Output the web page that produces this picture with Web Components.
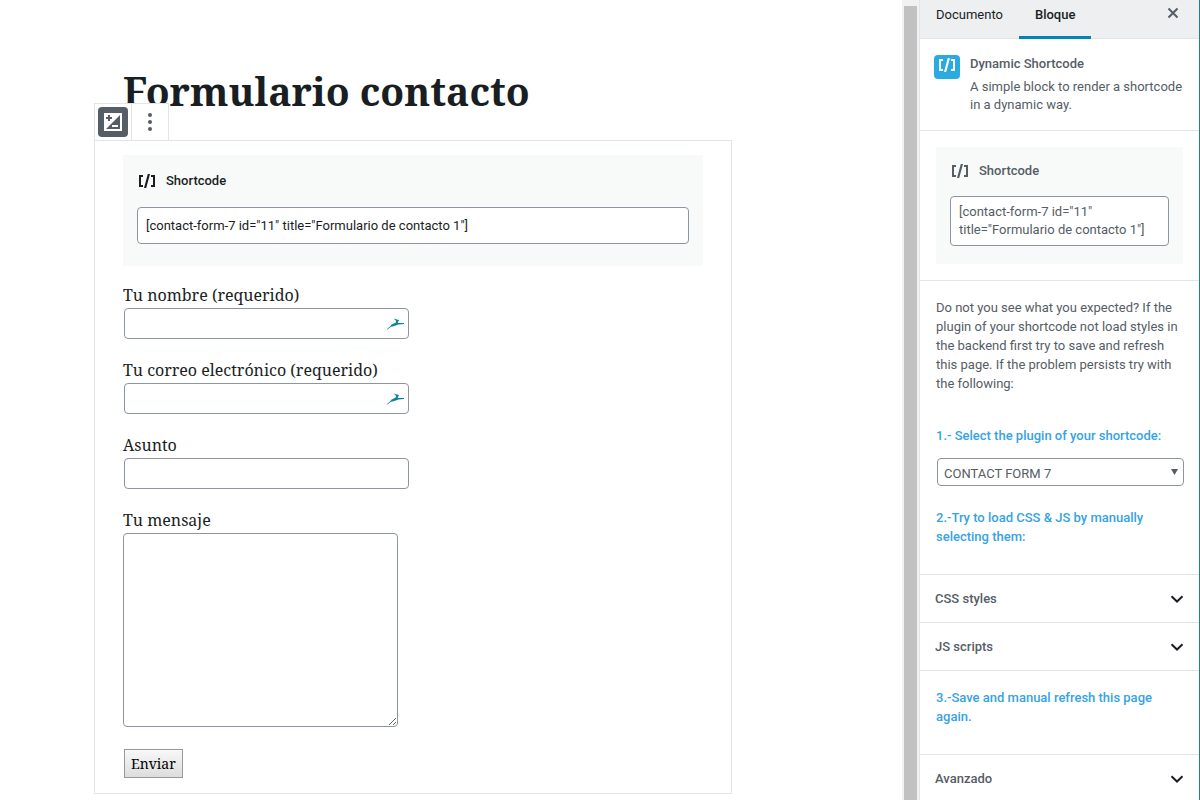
<!DOCTYPE html>
<html lang="es">
<head>
<meta charset="utf-8">
<meta name="viewport" content="width=device-width, initial-scale=1">
<title>Formulario contacto</title>
<style>
  html, body { height: 100%; margin: 0; }
  body {
    --ink: #191e23;
    --muted: #555d66;
    --line: #e2e4e7;
    --field: #8d96a0;
    --accent: #0085ba;
    --step: #36a3e2;
    --serif: "Noto Serif", "DejaVu Serif Condensed", serif;
    --sans: Roboto, "Noto Sans", sans-serif;
    background: #fff;
    color: var(--ink);
    font: 13px/18px var(--sans);
    overflow: hidden;
  }
</style>
</head>
<body>
<editor-shell>
  <editor-canvas slot="canvas">
    <shortcode-card slot="preview" value='[contact-form-7 id="11" title="Formulario de contacto 1"]'></shortcode-card>
    <contact-form></contact-form>
  </editor-canvas>
  <settings-sidebar slot="sidebar"></settings-sidebar>
</editor-shell>

<script>
  const define = (name, html, setup) => {
    const template = document.createElement('template');
    template.innerHTML = '<style>*, *::before { box-sizing: border-box; }</style>' + html;
    customElements.define(name, class extends HTMLElement {
      connectedCallback() {
        if (this.shadowRoot) return;
        const root = this.attachShadow({ mode: 'open' });
        root.append(template.content.cloneNode(true));
        if (setup) setup(this, root);
      }
    });
  };

  define('shortcode-icon', `
    <style>
      :host { display: block; width: 18px; height: 16px; }
      svg { display: block; }
    </style>
    <svg width="18" height="16" viewBox="0 0 18 16" fill="currentColor" aria-hidden="true">
      <path d="M1 2h4v2H3v8h2v2H1zM17 2h-4v2h2v8h-2v2h4zM9.800 1H12L8.200 15H6z"/>
    </svg>`);

  define('editor-shell', `
    <style>
      :host { display: flex; height: 100vh; overflow: hidden; }
      main { flex: 1; min-width: 0; overflow: hidden; }
      .track { width: 17px; padding: 6px 2px 0; background: #f1f1f1; }
      .thumb { height: 100%; background: #c1c1c1; }
      aside { width: 280px; border-left: 1px solid var(--line); overflow: hidden; }
      .edge { width: 1px; background: #1979ca; }
    </style>
    <main><slot name="canvas"></slot></main>
    <div class="track" aria-hidden="true"><div class="thumb"></div></div>
    <aside><slot name="sidebar"></slot></aside>
    <div class="edge"></div>`);

  define('editor-canvas', `
    <style>
      :host { display: block; padding: 63px 94px 0; }
      h1 { margin: 0; padding-left: 29px; font: bold 39px/56px var(--serif); white-space: nowrap; }
      .block { position: relative; max-width: 638px; margin-top: 21px; padding: 14px 28px 15px; border: 1px solid var(--line); }
      block-toolbar { position: absolute; left: -1px; bottom: calc(100% + 1px); }
    </style>
    <h1>Formulario contacto</h1>
    <section class="block">
      <block-toolbar></block-toolbar>
      <slot name="preview"></slot>
      <slot></slot>
    </section>`);

  define('block-toolbar', `
    <style>
      :host { display: flex; background: #fff; border: 1px solid var(--line); border-bottom: 0; }
      button { display: grid; place-items: center; width: 36px; height: 36px; padding: 0; border: 0; background: none; color: var(--muted); }
      button + button { width: 37px; border-left: 1px solid var(--line); }
      .on { display: grid; place-items: center; width: 30px; height: 30px; border-radius: 4px; background: var(--muted); }
      svg { display: block; }
    </style>
    <button type="button" aria-label="Vista previa"><span class="on">
      <svg width="18" height="18" viewBox="0 0 18 18"><path fill="#fff" d="M0 0h18v18H0z"/><path fill="#555d66" d="M16 2v14H2zM4 2h2v2h2v2H6v2H4V6H2V4h2z"/><path fill="#fff" d="M8 12h6v2H8z"/></svg>
    </span></button>
    <button type="button" aria-label="Más opciones">
      <svg width="4" height="18" viewBox="0 0 4 18" fill="currentColor"><circle cx="2" cy="2" r="2"/><circle cx="2" cy="9" r="2"/><circle cx="2" cy="16" r="2"/></svg>
    </button>`);

  define('shortcode-card', `
    <style>
      :host { display: block; padding: 14px; background: #f8f9f9; }
      :host([multiline]) { padding-top: 12px; }
      label { display: flex; align-items: center; gap: 10px; height: 24px; padding-left: 1px; font-weight: 500; }
      input, textarea { display: block; width: 100%; margin: 14px 0 8px; border: 1px solid var(--field); border-radius: 4px; background: #fff; color: inherit; font: inherit; padding: 0 8px; }
      input { height: 37px; }
      textarea { height: 50px; margin: 13px 0 4px; padding: 6px 8px; resize: none; overflow: hidden; }
    </style>
    <label for="code"><shortcode-icon></shortcode-icon>Shortcode</label>`,
    (host, root) => {
      const field = document.createElement(host.hasAttribute('multiline') ? 'textarea' : 'input');
      field.id = 'code';
      field.value = host.getAttribute('value');
      root.append(field);
    });

  define('form-field', `
    <style>
      :host { display: block; }
      label { display: block; font: 16px/26px var(--serif); white-space: nowrap; }
      .box { display: grid; width: 285px; margin-left: 1px; align-items: center; }
      input, svg { grid-area: 1 / 1; }
      input { width: 100%; height: 31px; padding: 0 8px; border: 1px solid var(--field); border-radius: 4px; background: #fff; }
      svg { display: none; justify-self: end; margin-right: 5px; pointer-events: none; }
      :host([autofill]) svg { display: block; }
    </style>
    <label for="field"><slot></slot></label>
    <div class="box">
      <input id="field">
      <svg width="18" height="14" viewBox="0 0 18 14" fill="#0e8299" aria-hidden="true"><path d="M.8 12.300L5 8.600 4.800 8 9.800 5.600 10.200 4 7.500 1.500 10 2.200 13 3 11.600 5.900H18V7.100L12.500 7.500 7.500 9.300 5 9.800 1 12.800z"/></svg>
    </div>`,
    (host, root) => { root.querySelector('input').type = host.getAttribute('type') || 'text'; });

  define('contact-form', `
    <style>
      :host { display: block; padding-top: 16px; font: 16px/26px var(--serif); }
      form { display: grid; gap: 18px; }
      label, textarea { display: block; }
      textarea { width: 275px; height: 194px; border: 1px solid var(--field); border-radius: 4px; background: #fff; margin: 0; }
      button { justify-self: start; height: 29px; margin: 4px 0 0 1px; padding: 0 6px; border: 1px solid #999; border-radius: 0; background: linear-gradient(#f8f8f8, #dddddd); color: #000; font: 14px/20px var(--serif); }
    </style>
    <form>
      <form-field autofill>Tu nombre (requerido)</form-field>
      <form-field autofill type="email">Tu correo electrónico (requerido)</form-field>
      <form-field>Asunto</form-field>
      <div>
        <label for="message">Tu mensaje</label>
        <textarea id="message"></textarea>
      </div>
      <button type="button">Enviar</button>
    </form>`);

  define('panel-toggle', `
    <style>
      :host { display: block; border-bottom: 1px solid var(--line); }
      button { display: flex; align-items: center; justify-content: space-between; width: 100%; height: 47px; padding: 0 15px; border: 0; background: none; color: var(--muted); font: 500 13px/18px var(--sans); }
      svg { color: var(--ink); }
    </style>
    <button type="button" aria-expanded="false"><slot></slot>
      <svg width="14" height="10" viewBox="0 0 14 10" fill="none" stroke="currentColor" stroke-width="2" aria-hidden="true"><path d="M1.500 2.300L7 7.500l5.500-5.200"/></svg>
    </button>`);

  define('settings-sidebar', `
    <style>
      :host { display: block; color: var(--muted); }
      header { display: flex; height: 39px; background: #edeff0; border-bottom: 1px solid var(--line); }
      header button { border: 0; background: none; color: var(--ink); font: inherit; padding: 0 16px 10px; height: 39px; white-space: nowrap; }
      header .active { padding-bottom: 7px; border-bottom: 3px solid var(--accent); font-weight: 500; }
      header .close { margin-left: auto; padding: 0 20px 9px; color: var(--muted); }
      .info { display: flex; gap: 10px; height: 92px; padding: 16px 14px; border-bottom: 1px solid var(--line); }
      .badge { display: grid; justify-items: center; flex: none; width: 26px; height: 24px; padding-top: 2px; border-radius: 4px; background: #29abe2; color: #fff; }
      h2 { margin: 0 0 5px; font: 500 13px/18px var(--sans); }
      p { margin: 0; }
      .code { padding: 16px; border-bottom: 1px solid var(--line); }
      .help { padding: 17px 16px 28px; border-bottom: 1px solid var(--line); line-height: 19px; }
      .step { display: block; color: var(--step); font-weight: 500; line-height: 19px; }
      .help label { margin: 33px 0 13px; }
      .help .second { margin-top: 22px; }
      .picker { display: grid; align-items: center; margin-left: 1px; width: 100%; }
      select, .picker svg { grid-area: 1 / 1; }
      select { appearance: none; height: 28px; padding: 2px 6px 0; border: 1px solid var(--field); border-radius: 4px; background: #fff; color: inherit; font: inherit; }
      .picker svg { justify-self: end; margin-right: 6px; pointer-events: none; }
      .last { padding: 17px 16px 28px; border-bottom: 1px solid var(--line); }
    </style>
    <header>
      <button type="button">Documento</button>
      <button type="button" class="active">Bloque</button>
      <button type="button" class="close" aria-label="Cerrar ajustes">
        <svg width="12" height="12" viewBox="0 0 12 12" stroke="currentColor" stroke-width="2"><path d="M1.500 1.500l9 9M10.500 1.500l-9 9"/></svg>
      </button>
    </header>
    <section class="info">
      <span class="badge"><shortcode-icon></shortcode-icon></span>
      <div><h2>Dynamic Shortcode</h2><p>A simple block to render a shortcode in a dynamic way.</p></div>
    </section>
    <section class="code">
      <shortcode-card multiline value='[contact-form-7 id="11" title="Formulario de contacto 1"]'></shortcode-card>
    </section>
    <section class="help">
      <p>Do not you see what you expected? If the plugin of your shortcode not load styles in the backend first try to save and refresh this page. If the problem persists try with the following:</p>
      <label class="step" for="plugin">1.- Select the plugin of your shortcode:</label>
      <div class="picker">
        <select id="plugin"><option>CONTACT FORM 7</option></select>
        <svg width="7" height="6" viewBox="0 0 7 6" fill="currentColor" aria-hidden="true"><path d="M0 0h7L3.500 6z"/></svg>
      </div>
      <p class="step second">2.-Try to load CSS &amp; JS by manually selecting them:</p>
    </section>
    <panel-toggle>CSS styles</panel-toggle>
    <panel-toggle>JS scripts</panel-toggle>
    <section class="last"><p class="step">3.-Save and manual refresh this page again.</p></section>
    <panel-toggle>Avanzado</panel-toggle>`);
</script>
</body>
</html>
